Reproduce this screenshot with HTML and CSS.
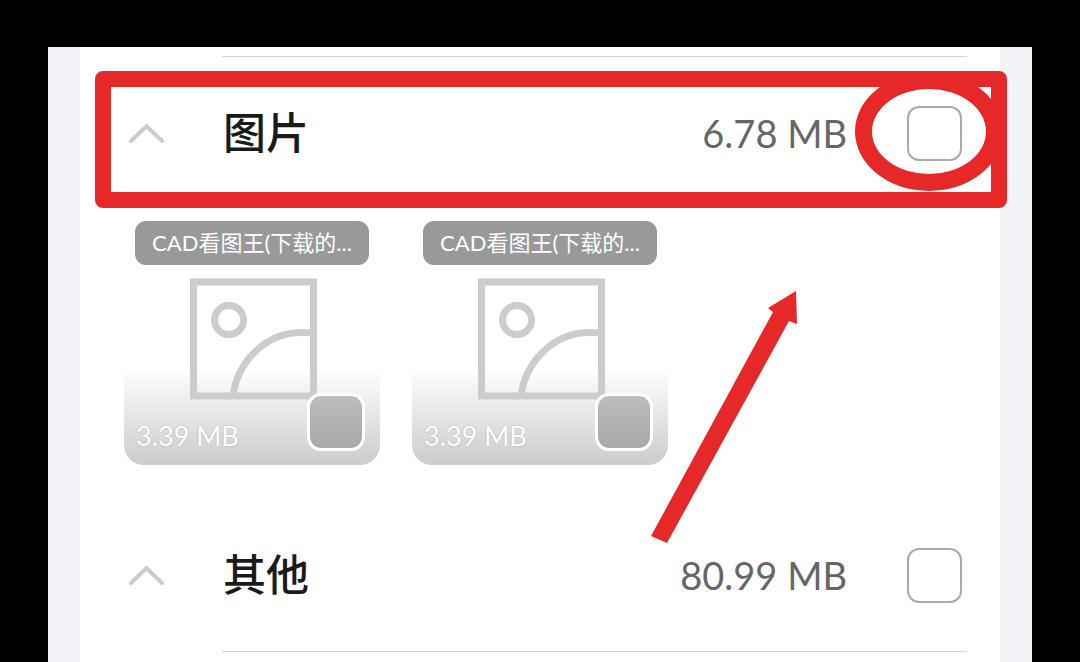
FILE: index.html
```html
<!DOCTYPE html>
<html lang="zh-CN">
<head>
    <meta charset="UTF-8">
    <meta name="viewport" content="width=device-width, initial-scale=1.0">
    <title>文件清理</title>
    <link rel="stylesheet" href="styles.css">
</head>
<body>
    <div class="screen">
        <main class="panel">
            <section class="group">
                <div class="row">
                    <button class="toggle" type="button" aria-label="收起图片">
                        <svg width="36" height="22" viewBox="0 0 36 22"><path d="M3 19 L18.5 4 L34 19"/></svg>
                    </button>
                    <label class="title" for="pictures">图片</label>
                    <span class="size">6.78 MB</span>
                    <input class="check" type="checkbox" id="pictures">
                    <div class="mark-box"></div>
                    <div class="mark-circle"></div>
                </div>

                <div class="gallery">
                    <div class="tile">
                        <label class="tag" for="file1">CAD看图王(下载的...</label>
                        <svg class="picture" width="130" height="122" viewBox="0 0 130 122">
                            <rect x="6.5" y="4" width="120" height="114"/>
                            <circle cx="42" cy="42" r="14.5"/>
                            <path d="M46 117 C51 84 78 54 116 54.5 H124"/>
                        </svg>
                        <div class="tile-info">
                            <span>3.39 MB</span>
                            <input class="check check-tile" type="checkbox" id="file1">
                        </div>
                    </div>
                    <div class="tile">
                        <label class="tag" for="file2">CAD看图王(下载的...</label>
                        <svg class="picture" width="130" height="122" viewBox="0 0 130 122">
                            <rect x="6.5" y="4" width="120" height="114"/>
                            <circle cx="42" cy="42" r="14.5"/>
                            <path d="M46 117 C51 84 78 54 116 54.5 H124"/>
                        </svg>
                        <div class="tile-info">
                            <span>3.39 MB</span>
                            <input class="check check-tile" type="checkbox" id="file2">
                        </div>
                    </div>
                    <svg class="mark-arrow" width="148" height="254" viewBox="0 0 148 254">
                        <path d="M146 1 L118 18 L123 22 L1 246 L17 253 L139 31 L147 34 Z"/>
                    </svg>
                </div>
            </section>

            <section class="group group-plain">
                <div class="row">
                    <button class="toggle" type="button" aria-label="展开其他">
                        <svg width="36" height="22" viewBox="0 0 36 22"><path d="M3 19 L18.5 4 L34 19"/></svg>
                    </button>
                    <label class="title" for="others">其他</label>
                    <span class="size">80.99 MB</span>
                    <input class="check" type="checkbox" id="others">
                </div>
            </section>
            <hr class="divider">
        </main>
    </div>
</body>
</html>
```

FILE: styles.css
```css
:root {
    --side: #f2f4f7;
    --line: #d6d6d6;
    --text: #1a1a1a;
    --muted: #666666;
    --icon: #cccccc;
    --mark: #e62828;
}

* {
    box-sizing: border-box;
}

body {
    margin: 0;
    padding: 47px 48px 0;
    min-height: 100vh;
    display: flex;
    background-color: #000;
    color: var(--text);
    font-family: Lato, 'Noto Sans CJK SC', sans-serif;
}

.screen {
    flex: 1;
    padding: 0 32px;
    background-color: var(--side);
}

.panel {
    height: 100%;
    padding-top: 9px;
    background-color: #fff;
}

.group::before,
.divider {
    content: "";
    display: block;
    height: 1px;
    margin: 0 33px 0 142px;
    border: none;
    background-color: var(--line);
}

.group-plain::before {
    display: none;
}

/* 分类标题行 */
.row {
    position: relative;
    display: flex;
    align-items: center;
    height: 152px;
    padding: 0 38px 0 48px;
}

.toggle {
    display: flex;
    width: 36px;
    padding: 0;
    border: none;
    background: none;
    cursor: pointer;
}

.toggle path {
    fill: none;
    stroke: var(--icon);
    stroke-width: 4;
    stroke-linecap: round;
}

.title {
    flex: 1;
    margin-left: 59px;
    font-size: 43px;
    line-height: 60px;
    font-weight: 500;
}

.size {
    margin-right: 60px;
    color: var(--muted);
    font-size: 38px;
    line-height: 60px;
}

.check {
    appearance: none;
    width: 55px;
    height: 55px;
    margin: 0;
    border: 2px solid #aaa;
    border-radius: 12px;
    background-color: #fff;
    cursor: pointer;
}

/* 图片列表 */
.gallery {
    position: relative;
    display: flex;
    gap: 32px;
    padding: 12px 44px 34px;
}

.tile {
    display: flex;
    flex-direction: column;
    align-items: center;
    width: 256px;
    height: 244px;
    border-radius: 20px;
    background: linear-gradient(rgba(204, 204, 204, 0) 60%, #cccccc);
}

.tag {
    width: 234px;
    height: 44px;
    border-radius: 11px;
    background-color: #999;
    color: #fff;
    font-size: 22px;
    line-height: 44px;
    text-align: center;
    white-space: nowrap;
}

.picture {
    margin-top: 13px;
    fill: none;
    stroke: var(--icon);
    stroke-width: 7;
}

.tile-info {
    display: flex;
    align-items: center;
    justify-content: space-between;
    align-self: stretch;
    margin-top: -8px;
    padding: 0 15px 0 12px;
    color: #fff;
    font-size: 27px;
    line-height: 32px;
    text-shadow: 0 0 2px #aaa;
}

.tile-info span {
    padding-top: 28px;
}

.check-tile {
    width: 58px;
    height: 58px;
    border: 3px solid #fff;
    border-radius: 14px;
    background: linear-gradient(#bdbdbd, #a8a8a8) padding-box;
}

/* 红色标注 */
.mark-box,
.mark-circle,
.mark-arrow {
    position: absolute;
    pointer-events: none;
}

.mark-box {
    inset: 14px -7px 1px 15px;
    border: 16px solid var(--mark);
    border-radius: 8px;
}

.mark-circle {
    top: 15px;
    right: -3px;
    width: 148px;
    height: 119px;
    border: 17px solid var(--mark);
    border-radius: 50%;
}

.mark-arrow {
    top: 81px;
    left: 570px;
    fill: var(--mark);
}
```
